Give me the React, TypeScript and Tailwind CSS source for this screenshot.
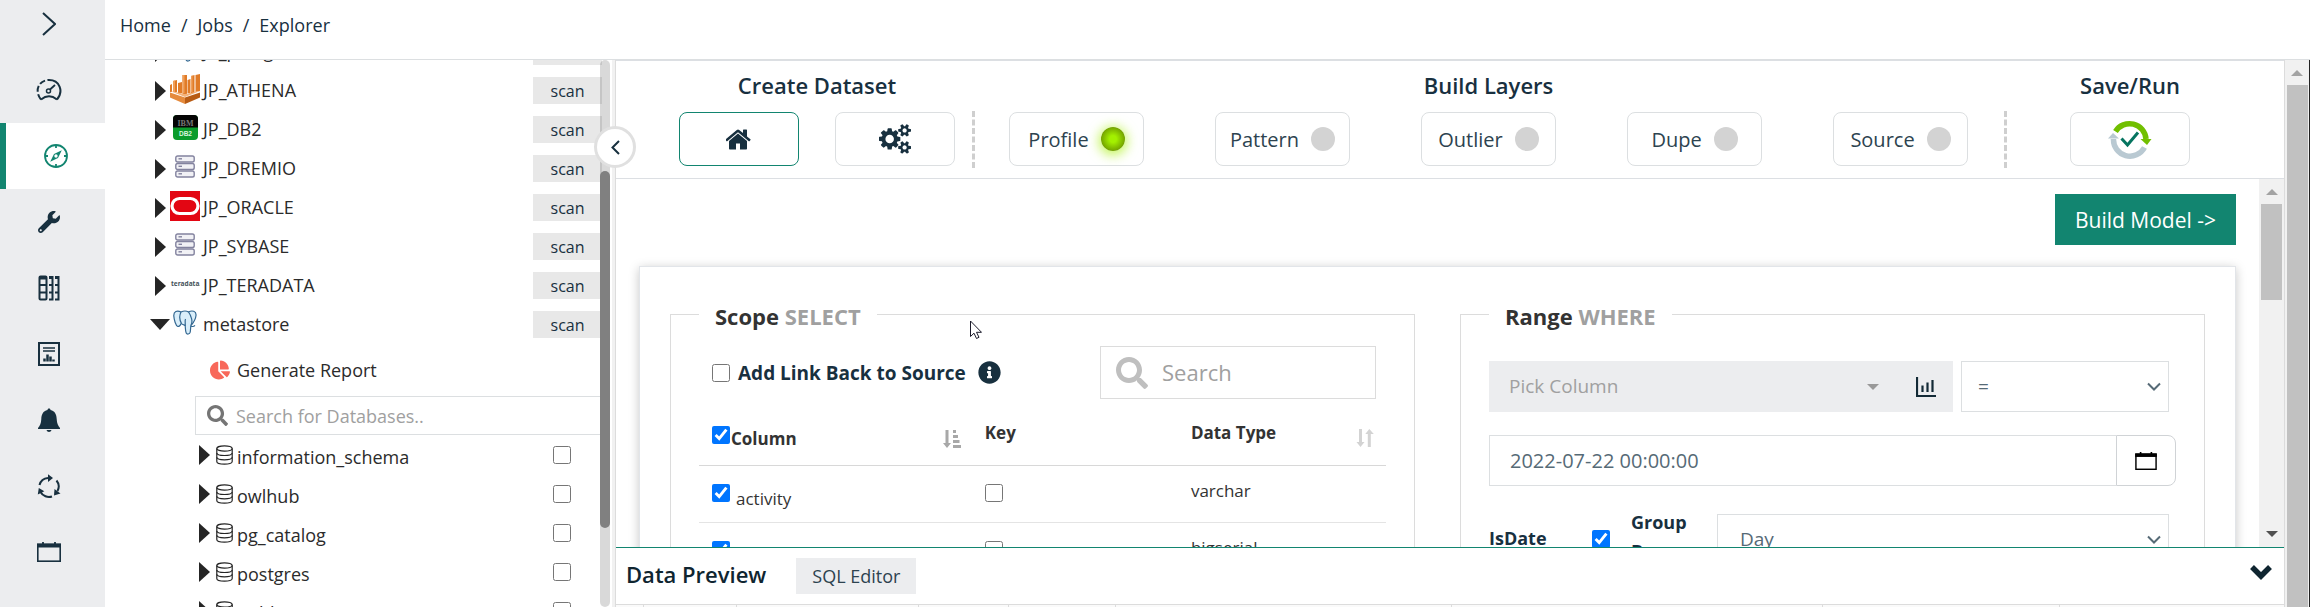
import React from "react";
import { FaWrench, FaSearch, FaInfoCircle, FaChartPie } from "react-icons/fa";

/* ---------- rail icons ---------- */

const railSvg = "h-6 w-6 text-[#18303f]";

function GaugeIcon() {
  return (
    <svg viewBox="0 0 26 24" className="h-6 w-[26px] text-[#18303f]" fill="none" stroke="currentColor" strokeWidth="2">
      <path d="M5 21.5C-2 13 2.500 2 13 2" strokeDasharray="6 2.500" />
      <path d="M13 2C23.500 2 28 13 21 21.500" />
      <path d="M5 21.500C10 17.500 16 17.500 21 21.500" />
      <circle cx="12.500" cy="13" r="2" strokeWidth="1.500" />
      <path d="M14 11.500L19 7" strokeWidth="1.800" />
    </svg>
  );
}

function CompassIcon() {
  return (
    <svg viewBox="0 0 24 24" className="h-6 w-6 text-[#128570]" fill="none" stroke="currentColor" strokeWidth="1.800">
      <circle cx="12" cy="12" r="11" />
      <path d="M12 1v3M12 20v3M1 12h3M20 12h3" />
      <path fillRule="evenodd" fill="currentColor" stroke="none" d="M17.800 6.200L14 14L6.200 17.800L10 10ZM12 10.300a1.700 1.700 0 1 0 0 3.400a1.700 1.700 0 0 0 0-3.400Z" />
    </svg>
  );
}

function ColumnsIcon() {
  return (
    <svg viewBox="0 0 22 26" className="h-[26px] w-[22px] text-[#18303f]" fill="none" stroke="currentColor" strokeWidth="2">
      <rect x="1.500" y="1.500" width="7" height="23" rx="1" />
      <path d="M1 3h8" strokeWidth="3" />
      <path d="M1.500 10h7M1.500 17.500h7" />
      <path d="M11 2h3.500v22.500H11M11 10h3.500M11 17.500h3.500" />
      <path d="M17 2h3.500v22.500H17M17 10h3.500M17 17.500h3.500" />
      <path d="M11 2.500h3.500M17 2.500h3.500" strokeWidth="3" />
    </svg>
  );
}

function ReportIcon() {
  return (
    <svg viewBox="0 0 22 24" className="h-6 w-[22px] text-[#18303f]" fill="none" stroke="currentColor" strokeWidth="2">
      <rect x="1" y="1" width="20" height="22" />
      <path d="M5 6h12M5 9h12" strokeWidth="1.500" />
      <path d="M6.500 19.500v-3M9.500 19.500v-7M12.500 19.500v-5M15.500 19.500v-2" strokeWidth="2.500" />
    </svg>
  );
}

function BellIcon() {
  return (
    <svg viewBox="0 0 24 24" className={railSvg} fill="currentColor">
      <path d="M12 .500c1 0 1.500.600 1.500 1.500C18 3 19.500 6.500 19.700 11c.2 4.500 1.300 6.500 3.300 9v1H1v-1c2-2.500 3.100-4.500 3.300-9C4.500 6.500 6 3 10.500 2c0-.900.500-1.500 1.500-1.500Z" />
      <path d="M9.500 22h5c-.400 1.300-1.300 2-2.500 2s-2.100-.700-2.500-2Z" />
    </svg>
  );
}

function CycleIcon() {
  return (
    <svg viewBox="0 0 24 24" className={railSvg} fill="none" stroke="currentColor" strokeWidth="2">
      <path d="M2.500 11A9.500 9.500 0 0 1 11 4" />
      <path d="M19.500 6.500A9.500 9.500 0 0 1 20.500 17" />
      <path d="M15 22.500A9.800 9.800 0 0 1 3.500 18" />
      <g fill="currentColor" stroke="none">
        <path d="M11 .300L16 4L11 8Z" />
        <path d="M23.500 19.500L17 21.500L17.500 15Z" />
        <path d="M.800 20.500L1.800 14L7.300 17.300Z" />
      </g>
    </svg>
  );
}

function CalendarIcon({ className }: { className: string }) {
  return (
    <svg viewBox="0 0 24 20" className={className} fill="none" stroke="currentColor">
      <rect x=".800" y="2.500" width="22.400" height="16.700" strokeWidth="1.600" />
      <path d="M0 3.500h24" strokeWidth="4" />
      <path d="M6 0v3M18 0v3" strokeWidth="1.800" />
    </svg>
  );
}

function GearIcon() {
  return (
    <svg viewBox="0 0 24 24" className={railSvg} fill="none" stroke="currentColor" strokeWidth="2">
      <path d="M7 2h3v3.500M14 5.500V2h3M5 6l2 2M19 6l-2 2" />
      <circle cx="12" cy="12" r="7" />
    </svg>
  );
}

const railItems = [
  { label: "Dashboard", icon: <GaugeIcon /> },
  { label: "Explorer", icon: <CompassIcon />, active: true },
  { label: "Rules", icon: <FaWrench className="h-[22px] w-[22px] text-[#18303f]" /> },
  { label: "Catalog", icon: <ColumnsIcon /> },
  { label: "Reports", icon: <ReportIcon /> },
  { label: "Alerts", icon: <BellIcon /> },
  { label: "Jobs", icon: <CycleIcon /> },
  { label: "Schedule", icon: <CalendarIcon className="h-5 w-6 text-[#18303f]" /> },
  { label: "Settings", icon: <GearIcon /> },
];

/* ---------- data source logos ---------- */

function AthenaLogo() {
  return (
    <svg viewBox="0 0 30 30" className="h-[30px] w-[30px]">
      <path fill="#e07b28" d="M0 11l2-1v8H0zM3 7l4-1v12H3zM8 9l4-1v11H8zM12.500 1H17v19h-4.500zM17.500 6l3-1v14h-3zM21 2l3.500-1v18H21zM25.500 1L30 0v17l-4.500 1z" />
      <path fill="#f0a05a" d="M3 7l2-.500V18H3zM12.500 1h2v18h-2zM21 2l1.500-.500V18H21z" />
      <path fill="#f3b27a" d="M0 17l15 3 15-3-15 6z" />
      <path fill="#e58a3c" d="M0 18.500l15 5V30L0 23.500z" />
      <path fill="#b85c14" d="M30 18.500l-15 5V30l15-6.500z" />
    </svg>
  );
}

function Db2Logo() {
  return (
    <svg viewBox="0 0 25 25" className="h-[25px] w-[25px]">
      <rect width="25" height="25" rx="4" fill="#0b9c2c" />
      <path d="M0 12.500V4a4 4 0 0 1 4-4h17a4 4 0 0 1 4 4v8.500z" fill="#050505" />
      <text x="12.500" y="10.500" textAnchor="middle" fontSize="8" fontWeight="700" fill="#777" fontFamily="Liberation Serif, serif">IBM</text>
      <text x="12.500" y="20.500" textAnchor="middle" fontSize="6.500" fontWeight="700" fill="#d8f5dd" fontFamily="Liberation Sans, sans-serif">DB2</text>
    </svg>
  );
}

function ServerLogo() {
  return (
    <svg viewBox="0 0 20 23" className="h-[23px] w-5" fill="#f1f1f5" stroke="#83839f" strokeWidth="1.400">
      {[1, 8.5, 16].map((y) => (
        <g key={y}>
          <rect x=".800" y={y} width="18.400" height="6" rx="1.800" />
          <path d={`M3.500 ${y + 2.8}h3.500`} />
        </g>
      ))}
    </svg>
  );
}

function OracleLogo() {
  return (
    <svg viewBox="0 0 30 30" className="h-[30px] w-[30px]">
      <rect width="30" height="30" fill="#e30613" />
      <rect x="2" y="7.500" width="26" height="15" rx="7.500" fill="none" stroke="#fff" strokeWidth="3.200" />
    </svg>
  );
}

function TeradataLogo() {
  return (
    <svg viewBox="0 0 30 12" className="h-3 w-[30px]">
      <text x="1" y="8" fontSize="6.500" fontWeight="700" fill="#44525a" fontFamily="Open Sans, sans-serif">
        teradata<tspan fill="#f37440">.</tspan>
      </text>
    </svg>
  );
}

function PostgresLogo() {
  return (
    <svg viewBox="0 0 24 25" className="h-[25px] w-6" fill="#d9eefa" stroke="#336791" strokeWidth="1.200" strokeLinejoin="round">
      <path d="M8 2C4 0 .500 1.500.800 6c.3 4 2 10 4 10.500 1.500.200 3-2 3.700-3.500z" />
      <path d="M15.500 2C19 0 23.500 1 23 5.500c-.400 4-2.500 7-4.500 9.500l-2.500-1z" />
      <path d="M8 2c-1.500 3-1.500 8 .500 11.500 1.500 2 3.500 1 3.700 2.500.3 2 .100 5 1 7 .8 1.700 3.500 1.300 4-.800.4-2 .300-5 .8-7.200 2-3 .500-9-2.500-13C13.500.800 10.500.800 8 2z" />
      <path d="M12.200 16c.3-3-.500-5 .3-7M18 16.200c1.500.500 3 .300 4-.800" fill="none" />
    </svg>
  );
}

function DbIcon() {
  return (
    <svg viewBox="0 0 17 20" className="h-5 w-[17px]" fill="none" stroke="#252525" strokeWidth="1.200">
      <ellipse cx="8.500" cy="3.500" rx="7.700" ry="2.700" />
      <path d="M.800 3.500v13c0 1.500 3.400 2.700 7.700 2.700s7.700-1.200 7.700-2.700v-13" />
      <path d="M.800 8c0 1.500 3.400 2.500 7.700 2.500s7.700-1 7.700-2.500M.800 12.300c0 1.500 3.400 2.500 7.700 2.500s7.700-1 7.700-2.500" />
    </svg>
  );
}

function ArrowRight() {
  return (
    <svg viewBox="0 0 11 20" className="h-5 w-[11px]" fill="#252525"><path d="M0 0l11 10L0 20z" /></svg>
  );
}

function ArrowDown() {
  return (
    <svg viewBox="0 0 20 11" className="h-[11px] w-5" fill="#252525"><path d="M0 0h20L10 11z" /></svg>
  );
}

/* ---------- toolbar icons ---------- */

function HomeIcon() {
  return (
    <svg viewBox="64 160 1664 1400" className="h-[22px] w-[26px]" fill="#18303f">
      <path d="M1408 992v480q0 26-19 45t-45 19h-384v-384h-256v384h-384q-26 0-45-19t-19-45v-480q0-1 .5-3t.5-3l575-474 575 474q1 2 1 6zm223-69l-62 74q-8 9-21 11h-3q-13 0-21-7l-692-577-692 577q-12 8-24 7-13-2-21-11l-62-74q-8-10-7-23.500t11-21.500l719-599q32-26 76-26t76 26l244 204v-195q0-14 9-23t23-9h192q14 0 23 9t9 23v408l219 182q10 8 11 21.500t-7 23.500z" />
    </svg>
  );
}

function CogsIcon() {
  const small =
    "v140q0 16-149 31-12 27-30 52 51 113 51 138 0 4-4 7-122 71-124 71-8 0-46-47t-52-68q-20 2-30 2t-30-2q-14 21-52 68t-46 47q-2 0-124-71-4-3-4-7 0-25 51-138-18-25-30-52-149-15-149-31v-140q0-16 149-31 13-29 30-52-51-113-51-138 0-4 4-7 4-2 35-20t59-34 30-16q8 0 46 46.500t52 67.500q20-2 30-2t30 2q51-71 92-112l6-2q4 0 124 70 4 3 4 7 0 25-51 138 17 23 30 52 149 15 149 31z";
  return (
    <svg viewBox="0 20 1920 1760" className="h-[30px] w-8" fill="#18303f">
      <path
        d={
          "M896 896q0-106-75-181t-181-75-181 75-75 181 75 181 181 75 181-75 75-181zm768 512q0-52-38-90t-90-38-90 38-38 90q0 53 37.500 90.500t90.500 37.500 90.500-37.500 37.500-90.500zm0-1024q0-52-38-90t-90-38-90 38-38 90q0 53 37.500 90.500t90.500 37.500 90.500-37.500 37.500-90.500zm-384 421v185q0 10-7 19.500t-16 10.500l-155 24q-11 35-32 76 34 48 90 115 7 11 7 20 0 12-7 19-23 30-82.500 89.500t-78.500 59.500q-11 0-21-7l-115-90q-37 19-77 31-11 108-23 155-7 24-30 24h-186q-11 0-20-7.500t-10-17.500l-23-153q-34-10-75-31l-118 89q-7 7-20 7-11 0-21-8-144-133-144-160 0-9 7-19 10-14 41-53t47-61q-23-44-35-82l-152-24q-10-1-17-9.500t-7-19.500v-185q0-10 7-19.500t16-10.500l155-24q11-35 32-76-34-48-90-115-7-11-7-20 0-12 7-20 22-30 82-89t79-59q11 0 21 7l115 90q34-18 77-32 11-108 23-154 7-24 30-24h186q11 0 20 7.500t10 17.500l23 153q34 10 75 31l118-89q8-7 20-7 11 0 21 8 144 133 144 160 0 8-7 19-12 16-42 54t-45 60q23 48 34 82l152 23q10 2 17 10.500t7 19.500zm640 533" +
          small +
          "m0-1024" +
          small
        }
      />
    </svg>
  );
}

function SaveRunIcon() {
  return (
    <svg viewBox="0 0 44 40" className="h-10 w-11" fill="none">
      <path d="M7.500 12.500A16.500 16.500 0 0 1 38 20" stroke="#71bf00" strokeWidth="5.500" />
      <path d="M32.500 20h11L39 26z" fill="#71bf00" />
      <path d="M36.500 28.500A16.500 16.500 0 0 1 5.500 20" stroke="#b9c9d2" strokeWidth="5.500" />
      <path d="M0 19.500h11L5 14z" fill="#b9c9d2" />
      <path d="M13.500 19.500l6 6.500L30 13.500" stroke="#067560" strokeWidth="3" />
    </svg>
  );
}

function ChevronDown() {
  return (
    <svg viewBox="0 0 14 9" className="h-[9px] w-[14px]" fill="none" stroke="#566a76" strokeWidth="2"><path d="M1 1.500l6 6 6-6" /></svg>
  );
}

function SortDownIcon() {
  return (
    <svg viewBox="0 0 18 18" className="h-[18px] w-[18px]" fill="#a8a8a8">
      <path d="M2.500 0h3v13H8L4 18l-4-5h2.500zM10 0h3v3h-3zM10 5h5v3h-5zM10 10h6.500v3H10zM10 15h8v3h-8z" />
    </svg>
  );
}

function SortBothIcon() {
  return (
    <svg viewBox="0 0 18 18" className="h-[18px] w-[18px]" fill="#d3d3d3">
      <path d="M3 0h3v13h2.500l-4 5-4-5H3zM11.800 18h3V5h3l-4.500-5-4 5h2.500z" />
    </svg>
  );
}

function ChartIcon() {
  return (
    <svg viewBox="0 0 20 20" className="h-5 w-5" fill="none" stroke="#132a36" strokeWidth="2.200">
      <path d="M1 0v19h19" />
      <path d="M6.500 15V8.500M11.500 15V5.500M16.500 15V3" />
    </svg>
  );
}

/* ---------- building blocks ---------- */

const box = "h-[18px] w-[18px] shrink-0 accent-[#0075ff]";

function SourceRow({ name, logo, open }: { name: string; logo: React.ReactNode; open?: boolean }) {
  return (
    <li className="flex h-[39px] items-center pl-[45px]">
      <span className="flex w-5 justify-center">{open ? <ArrowDown /> : <ArrowRight />}</span>
      <span className="flex w-[30px] justify-center pb-1">{logo}</span>
      <span className="flex-1 pb-[2px] pl-[3px]">{name}</span>
      <button className="h-[27px] w-[69px] bg-[#e8e8e8] text-base leading-6 text-[#18303f]">scan</button>
    </li>
  );
}

function LayerButton({ label, on }: { label: string; on?: boolean }) {
  return (
    <button className="flex h-[54px] w-[135px] items-center justify-center gap-3 rounded-lg border border-[#dcdfe1] text-xl text-[#2d434f]">
      <span className="pt-[2px]">{label}</span>
      {on ? (
        <span className="h-6 w-6 rounded-full bg-[radial-gradient(circle,#a3f000_20%,#6f9b00_75%)] shadow-[0_2px_12px_2px_#a3f000aa]" />
      ) : (
        <span className="h-6 w-6 rounded-full bg-[#d3d3d3]" />
      )}
    </button>
  );
}

function Panel({ title, clause, children }: { title: string; clause: string; children: React.ReactNode }) {
  return (
    <fieldset className="h-80 min-w-0 flex-1 border border-[#dcdcdc] px-7">
      <legend className="px-4 pt-1 text-[22px] leading-6 font-bold text-[#333]">
        {title} <span className="text-[#a0a0a0]">{clause}</span>
      </legend>
      {children}
    </fieldset>
  );
}

function Picker({ label, value, className }: { label: string; value: string; className: string }) {
  return (
    <div className={"grid items-center " + className}>
      <select aria-label={label} className="col-start-1 row-start-1 h-[51px] w-full appearance-none border border-[#dcdfe1] bg-white px-4 text-[19px] text-[#566a76]">
        <option>{value}</option>
      </select>
      <span className="pointer-events-none col-start-1 row-start-1 justify-self-end pr-2"><ChevronDown /></span>
    </div>
  );
}

const sources = [
  { name: "JP_postgres", logo: <PostgresLogo /> },
  { name: "JP_ATHENA", logo: <AthenaLogo /> },
  { name: "JP_DB2", logo: <Db2Logo /> },
  { name: "JP_DREMIO", logo: <ServerLogo /> },
  { name: "JP_ORACLE", logo: <OracleLogo /> },
  { name: "JP_SYBASE", logo: <ServerLogo /> },
  { name: "JP_TERADATA", logo: <TeradataLogo /> },
];

const schemas = ["information_schema", "owlhub", "pg_catalog", "postgres", "public"];

const columns = [
  { name: "activity", type: "varchar" },
  { name: "activity_id", type: "bigserial" },
];

export default function App() {
  return (
    <div className="flex h-screen overflow-hidden bg-white font-['Open_Sans','Noto_Sans',sans-serif] text-[#2b2b2b]">
      <nav className="w-[105px] shrink-0 overflow-hidden bg-[#ecedef]">
        <button aria-label="Expand menu" className="flex h-[57px] w-full justify-center pt-3 pr-2">
          <svg viewBox="0 0 14 24" className="h-6 w-[14px]" fill="none" stroke="#18303f" strokeWidth="2"><path d="M1 1l12 11L1 23" /></svg>
        </button>
        {railItems.map((item) => (
          <a
            key={item.label}
            href="#"
            aria-label={item.label}
            className={
              item.active
                ? "flex h-[66px] items-center justify-center border-l-[6px] border-[#128570] bg-white"
                : "flex h-[66px] items-center justify-center pr-[7px]"
            }
          >
            {item.icon}
          </a>
        ))}
      </nav>

      <div className="flex min-w-0 flex-1 flex-col">
        <header className="flex h-[60px] shrink-0 border-b border-[#dcdfe1] pt-[11px] pl-[15px] text-lg leading-7 text-[#18303f]">
          <ol className="flex gap-[10px]">
            <li><a href="#">Home</a></li>
            <li>/</li>
            <li><a href="#">Jobs</a></li>
            <li>/</li>
            <li>Explorer</li>
          </ol>
        </header>

        <div className="flex min-h-0 flex-1">
          <aside className="relative w-[511px] shrink-0 border-r border-[#dcdcdc]">
            <div className="h-full overflow-hidden pr-[13px]">
              <ul className="-mt-7 text-lg">
                {sources.map((s) => <SourceRow key={s.name} {...s} />)}
                <SourceRow name="metastore" logo={<PostgresLogo />} open />
                <li className="flex h-[52px] items-center gap-[7px] pl-[105px]">
                  <FaChartPie className="h-5 w-5 text-[#f8685a]" />
                  <a href="#">Generate Report</a>
                </li>
                <li className="ml-[90px] flex h-[39px] items-center gap-2 border border-[#dcdfe1] pl-[11px]">
                  <FaSearch className="h-[21px] w-[21px] text-[#757575]" />
                  <input aria-label="Search for Databases" placeholder="Search for Databases.." className="min-w-0 flex-1 outline-none placeholder:text-[#a0a0a0]" />
                </li>
                {schemas.map((s) => (
                  <li key={s} className="flex h-[39px] items-center pl-[94px]">
                    <ArrowRight />
                    <span className="pl-[6px]"><DbIcon /></span>
                    <label htmlFor={s} className="flex-1 pt-1 pl-1">{s}</label>
                    <input id={s} type="checkbox" className={"mr-[31px] " + box} />
                  </li>
                ))}
              </ul>
            </div>
            <div className="absolute inset-y-0 right-0 w-[3px] bg-[#f1f1f1]" />
            <div className="absolute inset-y-0 right-[5px] w-[10px] rounded-full bg-black/15" />
            <div className="absolute top-[111px] right-[5px] h-[357px] w-[10px] rounded-full bg-[#808080]" />
            <button aria-label="Collapse tree" className="absolute top-[66px] -right-[21px] z-10 flex h-[42px] w-[42px] items-center justify-center rounded-full border-[3px] border-[#e0e0e0] bg-white">
              <svg viewBox="0 0 9 15" className="h-[15px] w-[9px]" fill="none" stroke="#18303f" strokeWidth="2"><path d="M8 1L1.500 7.500L8 14" /></svg>
            </button>
          </aside>

          <main className="flex min-w-0 flex-1 flex-col">
            <div className="flex h-[119px] shrink-0 items-start border-t border-b border-[#dcdfe3] pt-[10px] text-[22px] font-semibold text-[#18303f]">
              <section className="pl-[63px]">
                <h2 className="mb-3 text-center leading-[29px]">Create Dataset</h2>
                <div className="flex gap-9">
                  <button aria-label="Home" className="flex h-[54px] w-[120px] items-center justify-center rounded-lg border border-[#128570]"><HomeIcon /></button>
                  <button aria-label="Settings" className="flex h-[54px] w-[120px] items-center justify-center rounded-lg border border-[#dcdfe1]"><CogsIcon /></button>
                </div>
              </section>
              <div className="mr-[34px] mb-[10px] ml-[17px] h-[57px] self-end border-l-[3px] border-dashed border-[#cfcfcf]" />
              <section className="flex-1">
                <h2 className="mb-3 text-center leading-[29px]">Build Layers</h2>
                <div className="flex justify-between font-normal">
                  <LayerButton label="Profile" on />
                  <LayerButton label="Pattern" />
                  <LayerButton label="Outlier" />
                  <LayerButton label="Dupe" />
                  <LayerButton label="Source" />
                </div>
              </section>
              <div className="mr-[63px] mb-[10px] ml-9 h-[57px] self-end border-l-[3px] border-dashed border-[#cfcfcf]" />
              <section className="pr-[94px]">
                <h2 className="mb-3 text-center leading-[29px]">Save/Run</h2>
                <button aria-label="Save and run" className="flex h-[54px] w-[120px] items-center justify-center rounded-lg border border-[#dcdfe1]"><SaveRunIcon /></button>
              </section>
            </div>

            <div className="flex min-h-0 flex-1">
              <div className="min-w-0 flex-1 overflow-hidden pt-[15px] pr-[23px] pl-[23px]">
                <div className="flex justify-end">
                  <button className="h-[51px] bg-[#128570] px-5 pt-[2px] text-[21px] text-white">Build Model -&gt;</button>
                </div>
                <div className="mt-[21px] flex items-start gap-[45px] border border-[#e2e5e9] px-[30px] pt-[33px] shadow-[0_2px_10px_rgba(0,0,0,0.22)]">
                  <Panel title="Scope" clause="SELECT">
                    <div className="mt-[18px] flex h-[53px] items-center pr-[10px] pl-[13px] text-[#18303f]">
                      <input id="linkback" type="checkbox" className={box} />
                      <label htmlFor="linkback" className="pt-[2px] pl-2 text-[19px] font-bold">Add Link Back to Source</label>
                      <FaInfoCircle className="ml-3 h-[23px] w-[23px]" />
                      <label className="ml-auto flex h-[53px] w-[276px] items-center gap-[14px] border border-[#dcdcdc] pl-[15px]">
                        <FaSearch className="h-8 w-8 shrink-0 text-[#bfbfbf]" />
                        <input aria-label="Search" placeholder="Search" className="w-full min-w-0 text-[22px] outline-none placeholder:text-[#a0a0a0]" />
                      </label>
                    </div>
                    <table className="mt-[11px] w-full table-fixed text-left text-[17px] text-[#333]">
                      <thead>
                        <tr className="h-[55px] border-b border-[#d8d8d8] align-top font-bold">
                          <th className="w-[40%] pt-4 pl-[13px]">
                            <div className="flex h-6 items-start">
                              <input id="allcols" type="checkbox" defaultChecked className={box} />
                              <label htmlFor="allcols" className="flex-1 pl-[1px]">Column</label>
                              <span className="pt-1 pr-[13px]"><SortDownIcon /></span>
                            </div>
                          </th>
                          <th className="w-[30%] pt-[10px] pl-[11px]">Key</th>
                          <th className="w-[30%] pt-[10px] pl-[11px]">
                            <div className="flex justify-between">Data Type<span className="pt-[9px] pr-3"><SortBothIcon /></span></div>
                          </th>
                        </tr>
                      </thead>
                      <tbody>
                        {columns.map((c) => (
                          <tr key={c.name} className="h-[57px] border-b border-[#e4e4e4] align-top">
                            <td className="pt-[18px] pl-[13px]">
                              <div className="flex items-start gap-[6px]">
                                <input id={c.name} type="checkbox" defaultChecked className={box} />
                                <label htmlFor={c.name} className="pt-[2px]">{c.name}</label>
                              </div>
                            </td>
                            <td className="pt-[18px] pl-[11px]"><input aria-label={c.name + " key"} type="checkbox" className={"block " + box} /></td>
                            <td className="pt-3 pl-[11px]">{c.type}</td>
                          </tr>
                        ))}
                      </tbody>
                    </table>
                  </Panel>

                  <Panel title="Range" clause="WHERE">
                    <div className="mt-[33px] flex gap-2 pr-[7px]">
                      <div className="flex h-[51px] flex-1 items-center bg-[#ecedef] pr-[17px] pl-5">
                        <button className="flex flex-1 items-center justify-between pr-[37px] text-[19px] text-[#a0a0a0]">
                          Pick Column
                          <svg viewBox="0 0 12 6" className="h-[6px] w-3" fill="#999"><path d="M0 0h12L6 6z" /></svg>
                        </button>
                        <button aria-label="Column statistics"><ChartIcon /></button>
                      </div>
                      <Picker label="Operator" value="=" className="w-[208px]" />
                    </div>
                    <div className="mt-[23px] flex">
                      <input aria-label="Start date" defaultValue="2022-07-22 00:00:00" className="h-[51px] min-w-0 flex-1 border border-r-0 border-[#dcdfe1] px-5 text-xl text-[#566a76] outline-none" />
                      <button aria-label="Open calendar" className="flex h-[51px] w-[60px] items-center justify-center rounded-r-lg border border-[#d0d3d6]"><CalendarIcon className="h-[18px] w-[22px] text-black" /></button>
                    </div>
                    <div className="mt-[22px] flex items-start pr-[7px] text-lg font-bold text-[#18303f]">
                      <label htmlFor="isdate" className="w-[103px] pt-4">IsDate</label>
                      <input id="isdate" type="checkbox" defaultChecked className={"mt-[22px] mr-[21px] " + box} />
                      <span className="w-[86px] pr-3 leading-[29px]">Group By</span>
                      <Picker label="Group by" value="Day" className="mt-[6px] flex-1 font-normal [&>select]:px-[22px]" />
                    </div>
                  </Panel>
                </div>
              </div>
              <div className="flex w-[25px] shrink-0 flex-col items-center justify-between bg-[#f1f1f1] py-[10px]">
                <svg viewBox="0 0 12 6" className="h-[6px] w-3" fill="#a3a3a3"><path d="M0 6h12L6 0z" /></svg>
                <div className="mt-[9px] mb-auto h-24 w-[21px] bg-[#c1c1c1]" />
                <svg viewBox="0 0 12 6" className="h-[6px] w-3" fill="#505050"><path d="M0 0h12L6 6z" /></svg>
              </div>
            </div>

            <footer className="shrink-0 border-t border-[#128570]">
              <div className="flex h-14 items-center pr-3 pl-[10px]">
                <h2 className="pb-1 text-[22px] font-semibold text-[#0f2530]">Data Preview</h2>
                <button className="ml-[30px] h-9 bg-[#ecedef] px-4 text-lg text-[#2d434f]">SQL Editor</button>
                <button aria-label="Collapse preview" className="ml-auto pb-2">
                  <svg viewBox="0 0 22 15" className="h-[15px] w-[22px]" fill="none" stroke="#0f2530" strokeWidth="5.500"><path d="M2 2l9 9 9-9" /></svg>
                </button>
              </div>
              <div className="grid h-[3px] grid-cols-[28fr_93fr_182fr_90fr_107fr_336fr_371fr_237fr_224fr] divide-x divide-[#dcdcdc] border-t border-[#dcdcdc] bg-[#fafafa]">
                <i /><i /><i /><i /><i /><i /><i /><i /><i />
              </div>
            </footer>
          </main>

          <div className="flex w-[26px] shrink-0 flex-col items-center border-r border-l border-r-[#222] border-l-[#dcdcdc] bg-[#f1f1f1] pt-[10px]">
            <svg viewBox="0 0 12 6" className="h-[6px] w-3" fill="#a3a3a3"><path d="M0 6h12L6 0z" /></svg>
            <div className="mt-[9px] w-[21px] flex-1 bg-[#c1c1c1]" />
          </div>
        </div>
      </div>

      <svg viewBox="0 0 12 19" className="absolute top-80 left-[970px] h-[19px] w-3" fill="#fff" stroke="#1a1a2a" strokeWidth="1">
        <path d="M.500 1v15.500l3.500-3.300 2.500 5.300 2.500-1.200-2.500-5h5z" />
      </svg>
    </div>
  );
}
